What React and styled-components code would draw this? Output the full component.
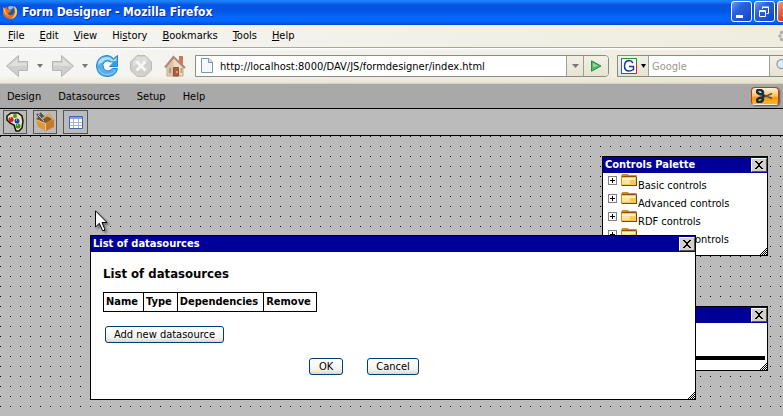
import React from "react";
import styled, { createGlobalStyle, css } from "styled-components";

const navy = "#000099";
const ink = "#000";

const GlobalStyle = createGlobalStyle`
  *, *::before, *::after { box-sizing: border-box; }
  html, body, #root { height: 100%; }
  body { margin: 0; }
  body, button, input {
    font-family: "DejaVu Sans Condensed", Tahoma, sans-serif;
    font-size: 11px;
    line-height: 14px;
    color: ${ink};
  }
  svg { display: block; flex: none; }
`;

const Browser = styled.div`
  display: flex;
  flex-direction: column;
  min-height: 100vh;
  overflow: hidden;
`;

const BareButton = styled.button`
  display: flex;
  align-items: center;
  justify-content: center;
  border: 0;
  padding: 0;
  background: none;
`;

/* ---------- browser chrome ---------- */

const TitleBar = styled.header`
  display: flex;
  align-items: center;
  gap: 4px;
  height: 25px;
  padding-left: 2px;
  overflow: hidden;
  background: linear-gradient(#1c86ff 0, #1877f4 2px, #0653e0 5px, #0355e4 11px, #0466fc 17px, #0467ff 21px, #0352e0 24px, #0340c4 25px);
`;

const PageTitle = styled.h1`
  flex: 1;
  margin: 0;
  font-size: 12px;
  line-height: 25px;
  font-weight: 700;
  color: #fff;
  text-shadow: 1px 1px 0 #0a2c8c;
  white-space: nowrap;
`;

const CaptionButtons = styled.div`
  display: flex;
  gap: 2px;
  margin: 0 -15px 2px 0;
`;

const CaptionButton = styled(BareButton)`
  width: 21px;
  height: 21px;
  border: 1px solid #fff;
  border-radius: 3px;
  background: ${(p) =>
    p.$danger
      ? "linear-gradient(135deg, #f0a080, #e0492a 50%, #c03010)"
      : "linear-gradient(135deg, #6f9cf0, #2a62dc 35%, #1d50d0 75%, #1540b0)"};
`;

const MenuBar = styled.nav`
  display: flex;
  align-items: center;
  gap: 15px;
  height: 22px;
  padding-left: 8px;
  overflow: hidden;
  background: linear-gradient(90deg, #f5f5f4, #efeddf);
`;

const Throbber = styled.span`
  margin: 0 -9px 0 auto;
`;

const NavBar = styled.div`
  display: flex;
  align-items: center;
  height: 37px;
  padding-left: 6px;
  overflow: hidden;
  border-top: 1px solid #aca899;
  border-bottom: 1px solid #d8d4c0;
  background: linear-gradient(#fff 0, #fff 1px, transparent 2px, transparent 28px, rgba(214, 209, 180, 0.4)),
    linear-gradient(90deg, #f6f6f4, #efecdc);
`;

const NavButtons = styled.div`
  display: flex;
  align-items: center;
  gap: 12px;
  margin-right: 9px;
`;

const History = styled.div`
  display: flex;
  align-items: center;
  gap: 8px;
  margin-right: -4px;
`;

const Field = styled.form`
  display: flex;
  height: 22px;
  border: 1px solid #8b8b88;
  background: #fff;
`;

const AddressField = styled(Field)`
  flex: 1;
  min-width: 0;
  padding-left: 5px;
  align-items: center;
  border-radius: 0 4px 4px 0;
`;

const SearchField = styled(Field)`
  width: 182px;
  margin: 0 -16px 0 8px;
`;

const TextInput = styled.input`
  flex: 1;
  min-width: 0;
  height: 20px;
  border: 0;
  padding: 2px 0 0 ${(p) => p.$inset}px;
  outline: 0;
  background: transparent;
  &::placeholder {
    color: #9c998c;
    opacity: 1;
  }
`;

const FieldButton = styled(BareButton)`
  gap: 4px;
  width: ${(p) => p.$width}px;
  height: 20px;
  background: linear-gradient(#f3f1e6, #e6e3d3);
  border-left: ${(p) => (p.$first ? "0" : "1px solid #a09d94")};
  border-right: ${(p) => (p.$first ? "1px solid #a09d94" : "0")};
  border-radius: ${(p) => (p.$last ? "0 3px 3px 0" : "0")};
`;

/* ---------- form designer ---------- */

const DesignerMenu = styled.nav`
  display: flex;
  align-items: center;
  gap: 17px;
  height: 24px;
  padding: 1px 4px 0 7px;
  background: #a9a9a9;
`;

const BrandButton = styled(BareButton)`
  width: 28px;
  height: 18px;
  margin: 0 0 1px auto;
  border: 1px solid #c43a10;
  border-bottom-color: #fff0c8;
  border-radius: 4px;
  background: linear-gradient(#fff2e0, #ffc45c 50%, #f39a08 60%, #ffb428);
  box-shadow: 1px 1px 2px #555;
`;

const ToolBar = styled.div`
  display: flex;
  align-items: center;
  gap: 6px;
  height: 28px;
  padding-left: 3px;
  border: solid ${ink};
  border-width: 1px 0;
  background: #bbb;
`;

const ToolButton = styled(BareButton)`
  width: ${(p) => (p.$wide ? 25 : 24)}px;
  height: 24px;
  border: 1px solid #555;
`;

const Canvas = styled.main`
  position: relative;
  flex: 1;
  background: #bbb;
`;

const Dots = styled.svg`
  position: absolute;
  width: 100%;
  height: 100%;
`;

const placements = {
  palette: css`top: 20px; right: 15px; width: 166px; height: 100px;`,
  properties: css`top: 170px; right: 15px; width: 166px; height: 65px;`,
  dialog: css`top: 99px; left: 90px; right: 87px;`,
};

const Frame = styled.section`
  position: absolute;
  ${(p) => placements[p.$place]}
  border: 1px solid ${ink};
  background: #fff;
`;

const FrameTitle = styled.header`
  display: flex;
  align-items: center;
  justify-content: space-between;
  height: 16px;
  padding: 0 0 0 2px;
  background: ${navy};
  h2 {
    margin: 0;
    font-size: 11px;
    line-height: 14px;
    font-weight: 700;
    color: #fff;
  }
`;

const FrameClose = styled(BareButton)`
  width: 16px;
  height: 14px;
  margin-left: auto;
  border: 1px solid;
  border-color: #fff #555 #555 #fff;
  background: #d4d0c8;
`;

const Grip = styled.svg`
  position: absolute;
  right: 0;
  bottom: 0;
`;

const Tree = styled.ul`
  margin: 0;
  padding: 0 0 0 5px;
  list-style: none;
`;

const TreeRow = styled.li`
  display: flex;
  height: 18px;
  white-space: nowrap;
`;

const Expander = styled(BareButton)`
  width: 9px;
  height: 9px;
  margin: 3px 4px 0 0;
  border: 1px solid #808080;
`;

const TreeLabel = styled.span`
  padding: 6px 0 0 1px;
`;

const Rule = styled.hr`
  height: 4px;
  margin: 33px 2px 0;
  border: 0;
  background: ${ink};
`;

const DialogBody = styled.div`
  padding: 14px 12px 24px;
`;

const Heading = styled.h3`
  margin: 0;
  font-size: 13px;
  line-height: 16px;
  font-weight: 700;
`;

const SourceTable = styled.table`
  margin: 10px 0 14px;
  border-collapse: collapse;
  th {
    height: 18px;
    padding: 2px 5px 2px 2px;
    border: 1px solid ${ink};
    line-height: 14px;
    font-weight: 700;
    text-align: left;
  }
`;

const PushButton = styled.button`
  height: 17px;
  min-width: 34px;
  padding: 0 8px;
  border: 1px solid #003c74;
  border-radius: 3px;
  background: linear-gradient(#fff, #f4f3ee 70%, #dcd8cc);
  line-height: 15px;
`;

const AddRow = styled.div`
  display: flex;
  padding-left: 2px;
`;

const DialogButtons = styled.div`
  display: flex;
  justify-content: center;
  gap: 24px;
  margin: 15px 58px 0 0;
`;

const Pointer = styled.svg`
  position: absolute;
  top: 74px;
  left: 95px;
  filter: drop-shadow(2px 2px 1px rgba(0, 0, 0, 0.4));
`;

/* ---------- drawings ---------- */

const FirefoxIcon = () => (
  <svg width="16" height="18" viewBox="0 0 16 18" aria-hidden="true">
    <circle cx="8.5" cy="8" r="6.5" fill="#2a57a4" />
    <path d="M6 3q3-2 6 0l-2 2-3 1z" fill="#8cc4ec" />
    <path d="M1 3l2 1 2-1 0 2 4 1-1 2-2 1q1 3 4 2 3-1 3-5l-1-4q4 3 3 7-1 6-7 6-6-1-7-6z" fill="#e8731c" />
    <path d="M12 2q4 3 3 7-1 5-6 6 4-3 4-7z" fill="#ffc940" />
    <path d="M1 4l2 1 1 4 3 3-4-2z" fill="#ffb050" />
  </svg>
);

const MinimizeGlyph = () => (
  <svg width="19" height="19" aria-hidden="true"><path d="M4 13h7v3h-7z" fill="#fff" /></svg>
);

const RestoreGlyph = () => (
  <svg width="19" height="19" fill="none" stroke="#fff" aria-hidden="true">
    <path d="M7.5 7V5.500h6v6h-2M7 5h7" />
    <path d="M4.5 8.500h6v6h-6zM4 9.500h7" />
  </svg>
);

const CloseGlyph = () => (
  <svg width="19" height="19" aria-hidden="true"><path d="M5 5l9 9M14 5l-9 9" stroke="#fff" strokeWidth="2" /></svg>
);

const Arrow = ({ forward }) => (
  <svg width="23" height="22" viewBox="0 0 23 22" aria-hidden="true">
    <g transform={forward ? "matrix(-1 0 0 1 23 0)" : undefined}>
      <path d="M.5 11L12.5.5V6.500H21.5V15.500H12.5V21.500z" fill="#cfcfcc" stroke="#b5b5b1" />
      <path d="M3 11L11.5 3.500V8H20.500V10.500z" fill="#e0e0dd" />
    </g>
  </svg>
);

const Caret = ({ width = 6, color = "#777" }) => (
  <svg width={width} height="4" viewBox="0 0 8 4" preserveAspectRatio="none" aria-hidden="true">
    <path d="M0 0h8l-4 4z" fill={color} />
  </svg>
);

const ReloadIcon = () => (
  <svg width="22" height="22" viewBox="0 0 22 22" aria-hidden="true">
    <path d="M17.500 3.500L21.500.5V11.500H13.500L15 7.500Q12 4.500 9 6.500 5.500 9 7.500 13T14 15.500L16.500 13.500H21.500Q20 21.500 11 21.500 1 21 .5 11 1 1 11 .5 14.500.5 17.500 3.500z" fill="#56aeea" stroke="#2583c8" />
    <path d="M2 10Q2.500 2 11 2q3.500 0 6.500 3.500L20.500 2.500V6L15.500 6Q10 2.500 6 7.500z" fill="#aee0fa" />
    <path d="M2.500 14Q6 20 12 19.500 17 19 19.500 15.500" fill="none" stroke="#8ed0f6" />
    <path d="M9 10.500h4l2.500-3" fill="none" stroke="#fff" strokeWidth="1.500" />
    <path d="M14.500 10.500H20.500V5z" fill="#3a98dc" />
  </svg>
);

const StopIcon = () => (
  <svg width="22" height="22" viewBox="0 0 22 22" aria-hidden="true">
    <path d="M7 .5h8L21.500 7v8L15 21.500H7L.5 15V7z" fill="#d0d0cc" stroke="#bdbdb8" />
    <path d="M7 2h8l4 4q-8 0-16 6V7z" fill="#dededb" />
    <path d="M6.500 6.500l9 9M15.500 6.500l-9 9" stroke="#f8f8f6" strokeWidth="3" />
  </svg>
);

const HomeIcon = () => (
  <svg width="22" height="22" viewBox="0 0 22 22" aria-hidden="true">
    <path d="M15 1h4v9h-4z" fill="#c87860" />
    <path d="M3 11L10 3l9 9v9H3z" fill="#ecdcc4" stroke="#c0a286" />
    <path d="M3.500 11L9.500 4v16.500H3.500z" fill="#dcc4a4" />
    <path d="M1 12.500L9.500 2 21 13" fill="none" stroke="#b48672" strokeWidth="2" />
    <path d="M9.500 12.500h5v8.500h-5z" fill="#b65c40" stroke="#8c543c" />
    <path d="M5 13h2v5H5zM16.500 13h1.500v5h-1.500z" fill="#b49a80" />
    <circle cx="13" cy="17" r="1" fill="#f0c050" />
  </svg>
);

const PageIcon = () => (
  <svg width="12" height="15" viewBox="0 0 12 15" aria-hidden="true">
    <path d="M.5.500H8L11.500 4V14.500H.5z" fill="#f4f8fb" stroke="#7f93a5" />
    <path d="M7.500.500V4.500H11.500" fill="#d4e0ea" stroke="#7f93a5" />
  </svg>
);

const GoIcon = () => (
  <svg width="12" height="12" viewBox="0 0 12 12" aria-hidden="true">
    <path d="M1.500.800L11 6 1.500 11.200z" fill="#58b76a" stroke="#288848" />
    <path d="M3 3l5 3-5 1z" fill="#98dc9c" />
  </svg>
);

const GoogleIcon = () => (
  <svg width="16" height="16" viewBox="0 0 16 16" fill="none" aria-hidden="true">
    <path d="M1 1h14v14H1z" fill="#fff" />
    <path d="M0 .5h15" stroke="#20a030" />
    <path d="M15.500 0v9" stroke="#20a030" />
    <path d="M15.500 5v11" stroke="#d82020" />
    <path d="M.5 1v15M0 15.500h15" stroke="#2858d0" />
    <path d="M12 5Q10.500 2.500 8 2.500 3.500 3 3.500 8T8 13q2.500 0 4.500-1.500V8.500H8" stroke="#1838a0" strokeWidth="1.500" />
  </svg>
);

const SearchIcon = () => (
  <svg width="20" height="20" viewBox="0 0 20 20" aria-hidden="true">
    <path d="M10 11l6 6" stroke="#a08050" strokeWidth="3" />
    <circle cx="7.500" cy="8" r="4.500" fill="#d9edf7" stroke="#a0a8ac" strokeWidth="1.500" />
  </svg>
);

const ThrobberIcon = () => (
  <svg width="14" height="14" viewBox="0 0 14 14" fill="#b0aea6" aria-hidden="true">
    {[[7, 2], [10.5, 3.5], [12, 7], [10.5, 10.5], [7, 12], [3.5, 10.5], [2, 7], [3.5, 3.5]].map(([x, y]) => (
      <circle key={`${x} ${y}`} cx={x} cy={y} r="1.700" />
    ))}
  </svg>
);

const BrandIcon = () => (
  <svg width="18" height="14" viewBox="0 0 18 14" fill="none" aria-hidden="true">
    <path d="M5 4.500l11 5M5 9.500l11-5" stroke="#55504a" strokeWidth="1.500" />
    <ellipse cx="4" cy="3" rx="3" ry="2" transform="rotate(25 4 3)" stroke="#142c48" strokeWidth="2.500" />
    <ellipse cx="4" cy="11" rx="3" ry="2" transform="rotate(-25 4 11)" stroke="#142c48" strokeWidth="2.500" />
    <path d="M6 4l3 3-3 3z" fill="#142c48" />
  </svg>
);

const PaletteIcon = () => (
  <svg width="18" height="20" viewBox="0 0 18 20" aria-hidden="true">
    <path d="M5 1h7l4 3 1 5-1 7-3 3h-3l-2-6-4-2-3-3V4z" fill="#f2e4a4" stroke="#111" strokeWidth="1.500" />
    <circle cx="9" cy="4" r="2" fill="#3a9c30" />
    <circle cx="5" cy="7.500" r="2.500" fill="#d01828" />
    <circle cx="11" cy="9" r="2.500" fill="#1a3cc8" />
    <circle cx="12" cy="14" r="2.500" fill="#289428" />
    <path d="M4 6h1M10 8h1M11 13h1" stroke="#fff" />
  </svg>
);

const ToolboxIcon = () => (
  <svg width="20" height="20" viewBox="0 0 20 20" aria-hidden="true">
    <path d="M1 7l10 4v8L3 15z" fill="#dc963c" />
    <path d="M10.500 10.500L19 7v8l-8 4z" fill="#c47c28" />
    <path d="M1 7l4-4 6 1 7 3-8 4z" fill="#7c5830" />
    <path d="M2 2l6 7M5 1l5 6" stroke="#48525e" strokeWidth="2" />
    <path d="M3 3l6 6" stroke="#b8c4d0" />
    <path d="M7 7L14 2l4 6" fill="none" stroke="#e0a04c" strokeWidth="2" />
    <path d="M1.500 8l9 3.500V18" fill="none" stroke="#f4c478" />
  </svg>
);

const TableIcon = () => (
  <svg width="14" height="13" viewBox="0 0 14 13" aria-hidden="true">
    <path d="M.5.500h13v12H.5z" fill="#fff" stroke="#4266aa" />
    <path d="M1 1h12v2H1z" fill="#7fa2dc" />
    <path d="M1 6.500h12M1 9.500h12M4.500 3v9M9.500 3v9" stroke="#a0b5dc" />
  </svg>
);

const CrossIcon = () => (
  <svg width="8" height="8" viewBox="0 0 8 8" shapeRendering="crispEdges" aria-hidden="true">
    <path d="M0 0h2v1h1v1h2V1h1V0h2v1H7v1H6v1H5v2h1v1h1v1h1v1H6V7H5V6H3v1H2v1H0V7h1V6h1V5h1V3H2V2H1V1H0z" fill={ink} />
  </svg>
);

const PlusIcon = () => (
  <svg width="7" height="7" aria-hidden="true"><path d="M1 3.500h5M3.500 1v5" stroke={ink} /></svg>
);

const FolderIcon = () => (
  <svg width="16" height="14" viewBox="0 0 16 14" aria-hidden="true">
    <path d="M1 1h6l1 1h7v2H1z" fill="#d38912" />
    <path d="M.5 2.500h15v10H.5z" fill="#f6c85c" stroke="#ce9026" />
    <path d="M1 3h14v1H1z" fill="#8a4c08" />
    <path d="M1 5h13v2H1z" fill="#fff4c0" />
    <path d="M1 7h8v4H1z" fill="#ffe494" />
    <path d="M1 12.500h15M15.500 4v9" stroke="#8a4008" />
  </svg>
);

const ResizeGrip = () => (
  <Grip width="9" height="9" shapeRendering="crispEdges" aria-hidden="true">
    <defs>
      <pattern id="check" width="2" height="2" patternUnits="userSpaceOnUse">
        <path d="M0 0h1v1H0zM1 1h1v1H1z" fill={ink} />
      </pattern>
    </defs>
    <path d="M9 0v9H0z" fill="url(#check)" />
  </Grip>
);

const DotGrid = () => (
  <Dots shapeRendering="crispEdges" aria-hidden="true">
    <defs>
      <pattern id="dots" width="10" height="10" patternUnits="userSpaceOnUse">
        <path d="M0 0h1v1H0z" fill={ink} />
      </pattern>
    </defs>
    <rect width="100%" height="100%" fill="url(#dots)" />
  </Dots>
);

/* ---------- page ---------- */

const browserMenus = [["", "F", "ile"], ["", "E", "dit"], ["", "V", "iew"], ["Hi", "s", "tory"], ["", "B", "ookmarks"], ["", "T", "ools"], ["", "H", "elp"]];
const designerMenus = ["Design", "Datasources", "Setup", "Help"];
const controlGroups = ["Basic controls", "Advanced controls", "RDF controls", "Container controls"];
const columns = ["Name", "Type", "Dependencies", "Remove"];

function Window({ place, title, children }) {
  return (
    <Frame $place={place}>
      <FrameTitle>
        {title && <h2>{title}</h2>}
        <FrameClose aria-label="Close"><CrossIcon /></FrameClose>
      </FrameTitle>
      {children}
      <ResizeGrip />
    </Frame>
  );
}

export default function App() {
  return (
    <Browser>
      <GlobalStyle />
      <TitleBar>
        <FirefoxIcon />
        <PageTitle>Form Designer - Mozilla Firefox</PageTitle>
        <CaptionButtons>
          <CaptionButton aria-label="Minimize"><MinimizeGlyph /></CaptionButton>
          <CaptionButton aria-label="Restore"><RestoreGlyph /></CaptionButton>
          <CaptionButton aria-label="Close" $danger><CloseGlyph /></CaptionButton>
        </CaptionButtons>
      </TitleBar>
      <MenuBar>
        {browserMenus.map(([before, key, after]) => (
          <BareButton key={before + key + after}><span>{before}<u>{key}</u>{after}</span></BareButton>
        ))}
        <Throbber><ThrobberIcon /></Throbber>
      </MenuBar>
      <NavBar>
        <NavButtons>
          <History>
            <BareButton aria-label="Back"><Arrow /></BareButton>
            <BareButton aria-label="Back history"><Caret /></BareButton>
            <BareButton aria-label="Forward"><Arrow forward /></BareButton>
            <BareButton aria-label="Forward history"><Caret /></BareButton>
          </History>
          <BareButton aria-label="Reload"><ReloadIcon /></BareButton>
          <BareButton aria-label="Stop"><StopIcon /></BareButton>
          <BareButton aria-label="Home"><HomeIcon /></BareButton>
        </NavButtons>
        <AddressField>
          <PageIcon />
          <TextInput aria-label="Address" defaultValue="http://localhost:8000/DAV/JS/formdesigner/index.html" $inset={7} />
          <FieldButton type="button" aria-label="Show addresses" $width={17}><Caret width={7} /></FieldButton>
          <FieldButton type="button" aria-label="Go" $width={25} $last><GoIcon /></FieldButton>
        </AddressField>
        <SearchField>
          <FieldButton type="button" aria-label="Search engine" $width={31} $first>
            <GoogleIcon />
            <Caret width={5} color={ink} />
          </FieldButton>
          <TextInput aria-label="Search" placeholder="Google" $inset={3} />
          <FieldButton type="button" aria-label="Search the web" $width={29}><SearchIcon /></FieldButton>
        </SearchField>
      </NavBar>
      <DesignerMenu>
        {designerMenus.map((name) => <BareButton key={name}>{name}</BareButton>)}
        <BrandButton aria-label="About"><BrandIcon /></BrandButton>
      </DesignerMenu>
      <ToolBar>
        <ToolButton aria-label="Controls palette"><PaletteIcon /></ToolButton>
        <ToolButton aria-label="Properties"><ToolboxIcon /></ToolButton>
        <ToolButton aria-label="Datasources" $wide><TableIcon /></ToolButton>
      </ToolBar>
      <Canvas>
        <DotGrid />
        <Window place="palette" title="Controls Palette">
          <Tree>
            {controlGroups.map((name) => (
              <TreeRow key={name}>
                <Expander aria-label={`Expand ${name}`}><PlusIcon /></Expander>
                <FolderIcon />
                <TreeLabel>{name}</TreeLabel>
              </TreeRow>
            ))}
          </Tree>
        </Window>
        <Window place="properties">
          <Rule />
        </Window>
        <Window place="dialog" title="List of datasources">
          <DialogBody>
            <Heading>List of datasources</Heading>
            <SourceTable>
              <thead>
                <tr>{columns.map((name) => <th key={name} scope="col">{name}</th>)}</tr>
              </thead>
            </SourceTable>
            <AddRow><PushButton>Add new datasource</PushButton></AddRow>
            <DialogButtons>
              <PushButton>OK</PushButton>
              <PushButton>Cancel</PushButton>
            </DialogButtons>
          </DialogBody>
        </Window>
        <Pointer width="13" height="22" viewBox="0 0 13 22" aria-hidden="true">
          <path d="M.5.800V17L4.300 13.300 7.500 20.500H9.500V18.500L7 12.500H12z" fill="#fff" stroke={ink} />
        </Pointer>
      </Canvas>
    </Browser>
  );
}
